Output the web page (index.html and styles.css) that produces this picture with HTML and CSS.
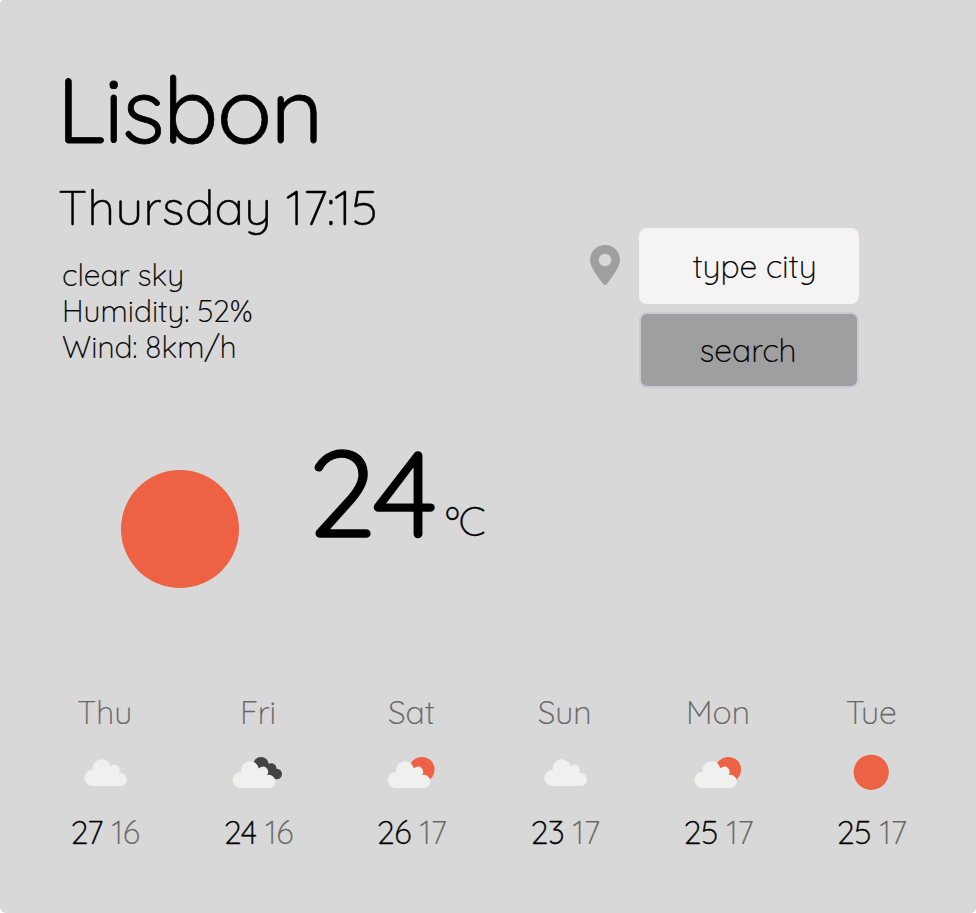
FILE: index.html
```html
<!DOCTYPE html>
<html lang="en">
<head>
<meta charset="utf-8">
<title>Weather</title>
<link rel="stylesheet" href="styles.css">
</head>
<body>
<svg class="symbols" aria-hidden="true">
  <symbol id="cloud" viewBox="0 0 80 80">
    <path d="M27 54a8 8 0 1 1 .8-16a9 9 0 0 1 17.7-3.4a5 5 0 0 1 8.2 6.4a6.6 6.6 0 1 1 1.8 13z"/>
  </symbol>
</svg>
<main class="card">
  <section class="top">
    <div class="place">
      <h1 class="city">Lisbon</h1>
      <h2 class="date">Thursday <span class="time">17:15</span></h2>
      <ul class="details">
        <li>clear sky</li>
        <li>Humidity: 52%</li>
        <li>Wind: 8km/h</li>
      </ul>
    </div>
    <form class="search">
      <svg class="pin" viewBox="0 0 384 512"><path fill-rule="evenodd" d="M215.7 499.2C267 435 384 279.4 384 192C384 86 298 0 192 0S0 86 0 192c0 87.4 117 243 168.3 307.2c12.3 15.3 35.1 15.3 47.4 0zM192 112a80 80 0 1 1 0 160a80 80 0 1 1 0-160z"/></svg>
      <div class="controls">
        <input class="field" type="text" placeholder="type city">
        <button class="submit" type="button">search</button>
      </div>
    </form>
  </section>
  <section class="now">
    <svg class="now-icon" viewBox="0 0 118 118"><circle class="sun" cx="59" cy="59" r="59"/></svg>
    <span class="temp">24</span><span class="unit">ºC</span>
  </section>
  <section class="forecast">
    <div class="day"><div class="name">Thu</div><svg class="icon" viewBox="0 0 80 80"><use class="cloud" href="#cloud"/></svg><div class="range"><span class="max">27</span> <span class="min">16</span></div></div>
    <div class="day"><div class="name">Fri</div><svg class="icon" viewBox="0 0 80 80"><g class="dark"><circle cx="43" cy="32.7" r="7.8"/><circle cx="53.4" cy="36.2" r="5"/><circle cx="58.8" cy="42" r="5.2"/><path d="M44 40l10-7 6 13H48z"/></g><use class="cloud" href="#cloud" x="-4.6" y="2"/></svg><div class="range"><span class="max">24</span> <span class="min">16</span></div></div>
    <div class="day"><div class="name">Sat</div><svg class="icon" viewBox="0 0 80 80"><circle class="sun" cx="50.9" cy="37.6" r="12.7"/><use class="cloud" href="#cloud" x="-2.6" y="2"/></svg><div class="range"><span class="max">26</span> <span class="min">17</span></div></div>
    <div class="day"><div class="name">Sun</div><svg class="icon" viewBox="0 0 80 80"><use class="cloud" href="#cloud"/></svg><div class="range"><span class="max">23</span> <span class="min">17</span></div></div>
    <div class="day"><div class="name">Mon</div><svg class="icon" viewBox="0 0 80 80"><circle class="sun" cx="50.4" cy="37.6" r="12.7"/><use class="cloud" href="#cloud" x="-3.1" y="2"/></svg><div class="range"><span class="max">25</span> <span class="min">17</span></div></div>
    <div class="day"><div class="name">Tue</div><svg class="icon" viewBox="0 0 80 80"><circle class="sun" cx="40.2" cy="40.3" r="17.6"/></svg><div class="range"><span class="max">25</span> <span class="min">17</span></div></div>
  </section>
</main>
</body>
</html>
```
FILE: styles.css
```css
* { box-sizing: border-box; margin: 0; padding: 0; }
body { background: #fff; font-family: Quicksand, Lato, sans-serif; font-weight: 300; color: #000; }
.symbols { display: none; }
.card { display: flex; flex-direction: column; width: 976px; height: 913px; padding: 57px 28px 0; background: #d8d8d8; border-radius: 4px 0 5px 6px; overflow: hidden; }
.top { display: flex; height: 368px; }
.place { width: 562px; padding-left: 34px; }
.city { margin-left: -5px; padding-top: 2px; font-size: 91px; line-height: 100px; font-weight: 400; letter-spacing: -1.4px; -webkit-text-stroke: 0.8px #000; }
.date { margin: 18px 0 0 -4px; font-size: 49px; line-height: 60px; font-weight: 300; letter-spacing: 0.35px; -webkit-text-stroke: 0.5px #000; }
.time { letter-spacing: -0.6px; }
.details { margin-top: 20px; list-style: none; font-size: 30px; line-height: 36px; -webkit-text-stroke: 0.2px #000; }
.search { display: flex; align-items: flex-start; gap: 19px; padding-top: 171px; }
.pin { width: 30px; height: 40px; margin-top: 17px; fill: #9f9f9f; }
.controls { display: flex; flex-direction: column; gap: 8px; width: 220px; }
.field, .submit { width: 220px; height: 76px; border-radius: 8px; font: inherit; font-size: 32px; letter-spacing: -0.1px; color: #000; text-align: center; -webkit-text-stroke: 0.2px #000; }
.field { padding: 0 0 0 11px; border: 0; background: #f5f3f4; }
.field::placeholder { color: #000; opacity: 1; }
.submit { padding: 0 2px 0 0; border: 2px solid #c6cbd8; background: #9f9f9f; }
.now { display: flex; height: 267px; padding-left: 93px; }
.now-icon { width: 118px; height: 118px; margin: 45px 69px 0 0; }
.temp { padding-top: 1px; font-size: 123px; line-height: 130px; font-weight: 400; letter-spacing: -1.5px; -webkit-text-stroke: 1.5px #000; }
.unit { margin: 71px 0 0 9px; font-size: 41px; line-height: 50px; letter-spacing: -0.8px; -webkit-text-stroke: 0.3px #000; }
.forecast { display: grid; grid-template-columns: repeat(6, 1fr); font-size: 32px; line-height: 40px; text-align: center; }
.name { color: #666; -webkit-text-stroke: 0.2px #666; }
.icon { display: block; width: 80px; height: 80px; margin: 0 auto; }
.range { padding-left: 1px; letter-spacing: -0.3px; }
.max { -webkit-text-stroke: 0.4px #000; }
.min { color: #666; -webkit-text-stroke: 0.2px #666; }
.sun { fill: #ed6245; }
.cloud { fill: #f0f0ee; }
.dark { fill: #444445; }
```
